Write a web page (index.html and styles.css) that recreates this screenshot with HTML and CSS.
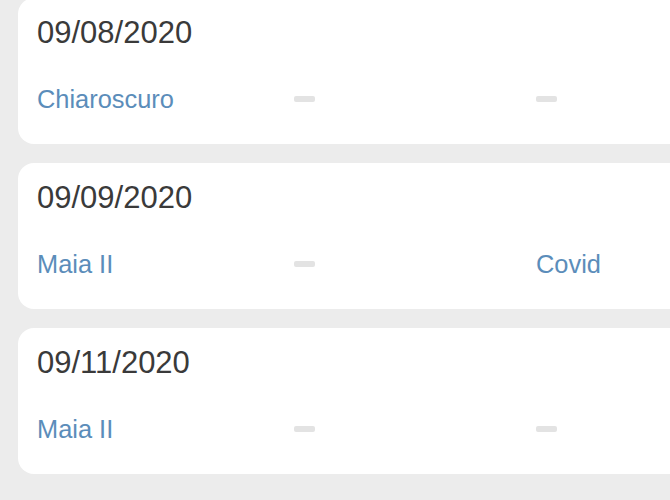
FILE: index.html
```html
<!DOCTYPE html>
<html lang="en">
<head>
    <meta charset="UTF-8">
    <meta name="viewport" content="width=device-width, initial-scale=1.0">
    <title>Sessions</title>
    <link rel="stylesheet" href="styles.css">
</head>
<body>
    <div class="session-list">
        <!-- 09/08 -->
        <div class="session-card">
            <div class="session-date">09/08/2020</div>
            <div class="session-row">
                <span class="session-name">Chiaroscuro</span>
                <span class="empty-slot"><span class="dash"></span></span>
                <span class="empty-slot"><span class="dash"></span></span>
            </div>
        </div>

        <!-- 09/09 -->
        <div class="session-card">
            <div class="session-date">09/09/2020</div>
            <div class="session-row">
                <span class="session-name">Maia II</span>
                <span class="empty-slot"><span class="dash"></span></span>
                <span class="session-name">Covid</span>
            </div>
        </div>

        <!-- 09/11 -->
        <div class="session-card">
            <div class="session-date">09/11/2020</div>
            <div class="session-row">
                <span class="session-name">Maia II</span>
                <span class="empty-slot"><span class="dash"></span></span>
                <span class="empty-slot"><span class="dash"></span></span>
            </div>
        </div>
    </div>
</body>
</html>
```

FILE: styles.css
```css
html {
    background: #ececec;
}
body {
    margin: 0;
    font-family: "Liberation Sans", Arial, sans-serif;
    background: #ececec;
    overflow: hidden;
}
.session-list {
    padding-left: 18px;
    margin-top: -2px;
}
/* cards run off the right side of the screen, so only the left corners show */
.session-card {
    background: #ffffff;
    border-radius: 16px 0 0 16px;
    height: 146px;
    box-sizing: border-box;
    padding: 16.5px 0 0 19px;
    margin-bottom: 19px;
}
.session-date {
    font-size: 31px;
    line-height: 36px;
    color: #3a3a3a;
}
.session-row {
    display: grid;
    grid-template-columns: 257px 242px 1fr;
    align-items: center;
    height: 30px;
    margin-top: 33px;
}
.session-name {
    font-size: 25.4px;
    line-height: 30px;
    color: #5b8dba;
}
.empty-slot {
    display: flex;
    align-items: center;
}
.dash {
    display: block;
    width: 21px;
    height: 6px;
    border-radius: 2px;
    background: #e3e3e3;
}
```
